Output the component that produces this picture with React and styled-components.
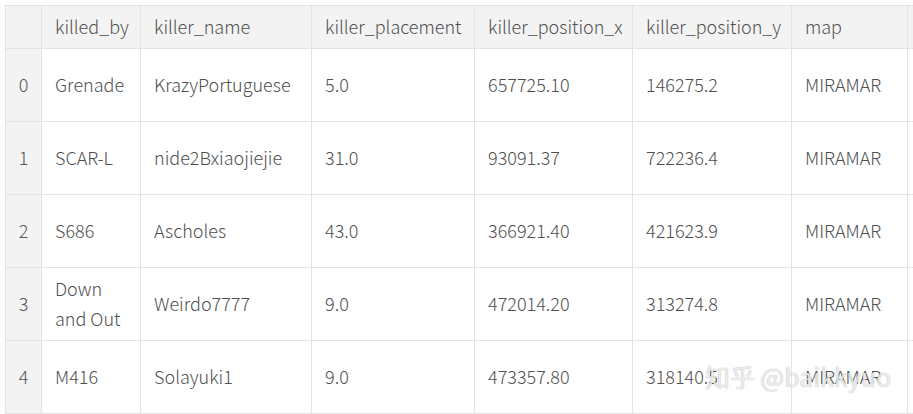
import React from "react";
import styled, { createGlobalStyle } from "styled-components";

const columns = [
  { key: "killed_by", width: 99 },
  { key: "killer_name", width: 171 },
  { key: "killer_placement", width: 163 },
  { key: "killer_position_x", width: 158 },
  { key: "killer_position_y", width: 159 },
  { key: "map", width: 116 },
];

const rows = [
  ["Grenade", "KrazyPortuguese", "5.0", "657725.10", "146275.2", "MIRAMAR"],
  ["SCAR-L", "nide2Bxiaojiejie", "31.0", "93091.37", "722236.4", "MIRAMAR"],
  ["S686", "Ascholes", "43.0", "366921.40", "421623.9", "MIRAMAR"],
  ["Down and Out", "Weirdo7777", "9.0", "472014.20", "313274.8", "MIRAMAR"],
  ["M416", "Solayuki1", "9.0", "473357.80", "318140.5", "MIRAMAR"],
];

export default function App() {
  return (
    <>
      <GlobalStyle />
      <Frame>
        <Table>
          <colgroup>
            <col style={{ width: 36 }} />
            {columns.map((c) => (
              <col key={c.key} style={{ width: c.width }} />
            ))}
            <col style={{ width: 40 }} />
          </colgroup>
          <thead>
            <HeadRow>
              <HeadCell />
              {columns.map((c) => (
                <HeadCell key={c.key}>{c.key}</HeadCell>
              ))}
              <HeadCell />
            </HeadRow>
          </thead>
          <tbody>
            {rows.map((row, i) => (
              <BodyRow key={i}>
                <IndexCell>{i}</IndexCell>
                {row.map((value, j) => (
                  <Cell key={j}>{value}</Cell>
                ))}
                <Cell />
              </BodyRow>
            ))}
          </tbody>
        </Table>
        <Watermark>知乎 @baikkyuo</Watermark>
      </Frame>
    </>
  );
}

const GlobalStyle = createGlobalStyle`
  html, body {
    margin: 0;
    background: #ffffff;
    overflow: hidden;
  }
`;

const Frame = styled.div`
  position: relative;
  width: 913px;
  height: 414px;
  padding: 5px 0 0 5px;
  box-sizing: border-box;
  overflow: hidden;
  font-family: "Noto Sans CJK KR", "Noto Sans", sans-serif;
  color: #4f4f4f;
`;

const Table = styled.table`
  border-collapse: collapse;
  table-layout: fixed;
  width: 942px;
  font-size: 18px;
  font-weight: 300;
`;

const HeadRow = styled.tr`
  height: 43px;
  background: #f3f3f3;
`;

const HeadCell = styled.th`
  border: 1px solid #e3e3e3;
  padding: 0 13px 3px;
  text-align: left;
  font-weight: 300;
  white-space: nowrap;
`;

const BodyRow = styled.tr`
  height: 73px;
`;

const Cell = styled.td`
  border: 1px solid #e3e3e3;
  padding: 0 13px 3px;
  line-height: 30px;
  vertical-align: middle;
`;

const IndexCell = styled(Cell)`
  background: #f3f3f3;
  text-align: center;
  padding: 0 0 3px;
  color: #555555;
`;

const Watermark = styled.div`
  position: absolute;
  left: 705px;
  top: 358px;
  font-size: 25px;
  color: rgba(255, 255, 255, 0.8);
  text-shadow: 0 0 1px rgba(60, 60, 60, 0.5);
  white-space: nowrap;
  pointer-events: none;
`;
